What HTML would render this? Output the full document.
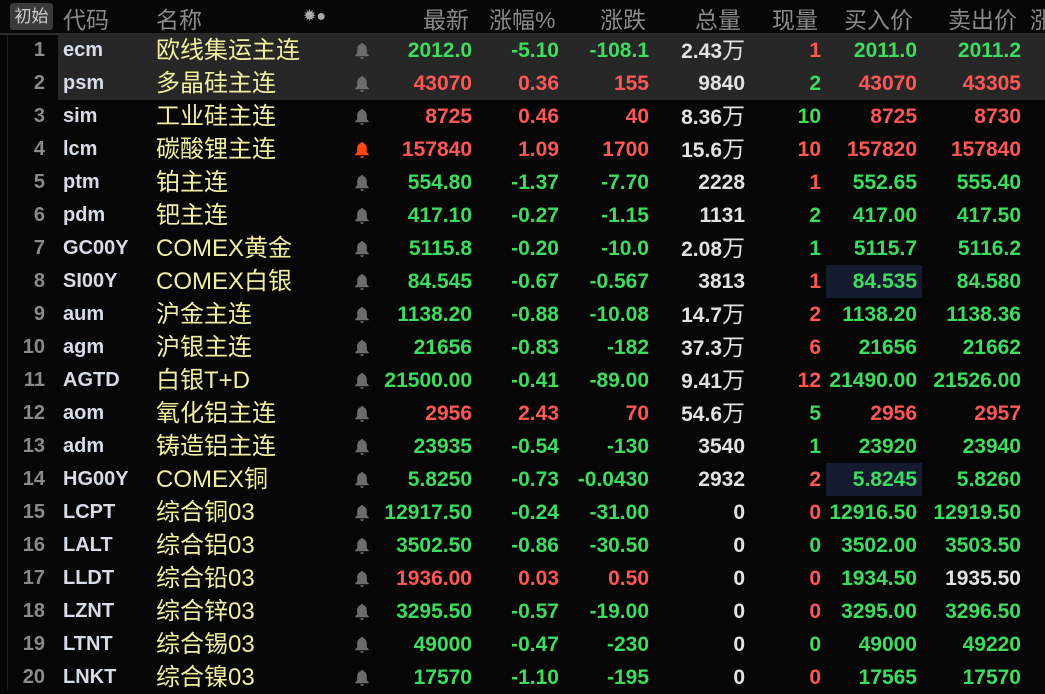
<!DOCTYPE html>
<html><head><meta charset="utf-8"><style>
body{margin:0;width:1045px;height:690px;background:#060606;overflow:hidden;font-family:"Liberation Sans","Noto Sans CJK SC",sans-serif;position:relative}
.hd{position:absolute;top:0;left:0;width:1045px;height:33px;border-bottom:2px solid #2c2c2c;color:#8a8a8a;font-size:23px}
.hd span{position:absolute;top:1px;white-space:nowrap}
.btn{position:absolute;left:10px;top:3px;width:43px;height:27px;background:#3a3a3a;border-radius:3px;color:#cfcfcf;font-size:17px;line-height:27px;text-align:center}
.row{position:absolute;left:0;width:1045px;height:33px;font-size:21px;font-weight:bold;line-height:33px}
.row span{position:absolute;top:0;white-space:nowrap}
.hl{background:#272727;left:58px !important;width:987px}
.n{left:0;width:45px;text-align:right;color:#8a8a8a;font-size:20px}
.c{left:63px;color:#d6dce8;font-size:20px}
.m{left:156px;color:#f2f0a0;font-weight:normal;font-size:24px}
.b{left:354px;top:8px!important;width:16px;height:18px}
.a{left:372px;width:100px;text-align:right}
.p{left:470px;width:89px;text-align:right}
.d{left:560px;width:89px;text-align:right}
.v{left:650px;width:95px;text-align:right;color:#e2e2e2}
.v i{font-style:normal;font-weight:normal;font-size:23px}
.q{left:750px;width:71px;text-align:right}
.y{left:826px;width:91px;text-align:right}
.s{left:922px;width:99px;text-align:right}
.G{color:#3ddc5f}.R{color:#ff5656}.W{color:#e2e2e2}
.box{background:#141b2e;left:826px!important;width:96px}
</style></head><body>
<div class="hd"><div class="btn">初始</div>
<span style="left:63px">代码</span><span style="left:156px">名称</span>
<span style="left:303px;top:6px;font-size:16px;color:#aaa">✹●</span>
<span style="left:423px">最新</span><span style="left:489px">涨幅%</span><span style="left:600px">涨跌</span>
<span style="left:695px">总量</span><span style="left:772px">现量</span><span style="left:844px">买入价</span><span style="left:948px">卖出价</span><span style="left:1030px">涨</span></div>
<div style="position:absolute;left:7px;top:35px;width:1px;height:655px;background:#1e1e1e"></div>
<div id="t"></div>
<script>
var D=[
["1","ecm","欧线集运主连","G","2012.0","-5.10","-108.1","2.43万","R1","G2011.0","G2011.2"],
["2","psm","多晶硅主连","R","43070","0.36","155","9840","G2","R43070","R43305"],
["3","sim","工业硅主连","R","8725","0.46","40","8.36万","G10","R8725","R8730"],
["4","lcm","碳酸锂主连","R","157840","1.09","1700","15.6万","R10","R157820","R157840"],
["5","ptm","铂主连","G","554.80","-1.37","-7.70","2228","R1","G552.65","G555.40"],
["6","pdm","钯主连","G","417.10","-0.27","-1.15","1131","G2","G417.00","G417.50"],
["7","GC00Y","COMEX黄金","G","5115.8","-0.20","-10.0","2.08万","G1","G5115.7","G5116.2"],
["8","SI00Y","COMEX白银","G","84.545","-0.67","-0.567","3813","R1","G84.535","G84.580"],
["9","aum","沪金主连","G","1138.20","-0.88","-10.08","14.7万","R2","G1138.20","G1138.36"],
["10","agm","沪银主连","G","21656","-0.83","-182","37.3万","R6","G21656","G21662"],
["11","AGTD","白银T+D","G","21500.00","-0.41","-89.00","9.41万","R12","G21490.00","G21526.00"],
["12","aom","氧化铝主连","R","2956","2.43","70","54.6万","G5","R2956","R2957"],
["13","adm","铸造铝主连","G","23935","-0.54","-130","3540","G1","G23920","G23940"],
["14","HG00Y","COMEX铜","G","5.8250","-0.73","-0.0430","2932","R2","G5.8245","G5.8260"],
["15","LCPT","综合铜03","G","12917.50","-0.24","-31.00","0","R0","G12916.50","G12919.50"],
["16","LALT","综合铝03","G","3502.50","-0.86","-30.50","0","G0","G3502.00","G3503.50"],
["17","LLDT","综合铅03","R","1936.00","0.03","0.50","0","R0","G1934.50","W1935.50"],
["18","LZNT","综合锌03","G","3295.50","-0.57","-19.00","0","R0","G3295.00","G3296.50"],
["19","LTNT","综合锡03","G","49000","-0.47","-230","0","G0","G49000","G49220"],
["20","LNKT","综合镍03","G","17570","-1.10","-195","0","R0","G17565","G17570"]];
var h="";
D.forEach(function(r,i){
 var top=34+i*33;
 var bell='<svg class="b" style="position:absolute" viewBox="0 0 16 18"><path d="M8 1c.8 0 1.3.5 1.3 1.1 2.4.7 3.5 2.8 3.5 5.3v3.8L14.7 13.3v1H1.3v-1L3.2 11.2V7.4c0-2.5 1.1-4.6 3.5-5.3C6.7 1.5 7.2 1 8 1zM6.2 15.2h3.6c0 1-.8 1.8-1.8 1.8s-1.8-.8-1.8-1.8z" fill="'+(i==3?'#ff4a10':'#6c6c6c')+'"/></svg>';
 var vol=r[7].replace("万","<i>万</i>");
 var bx=(i==7||i==13);
 h+='<div class="row" style="top:'+top+'px">'+(i<2?'<span class="hl" style="height:33px"></span>':'')+
 '<span class="n">'+r[0]+'</span><span class="c">'+r[1]+'</span><span class="m">'+r[2]+'</span>'+bell+
 '<span class="a '+r[3]+'">'+r[4]+'</span><span class="p '+r[3]+'">'+r[5]+'</span><span class="d '+r[3]+'">'+r[6]+'</span>'+
 '<span class="v">'+vol+'</span><span class="q '+r[8][0]+'">'+r[8].slice(1)+'</span>'+
 (bx?'<span class="box" style="height:33px"></span>':'')+
 '<span class="y '+r[9][0]+'">'+r[9].slice(1)+'</span><span class="s '+r[10][0]+'">'+r[10].slice(1)+'</span></div>';
});
document.getElementById("t").innerHTML=h;
</script>
</body></html>
